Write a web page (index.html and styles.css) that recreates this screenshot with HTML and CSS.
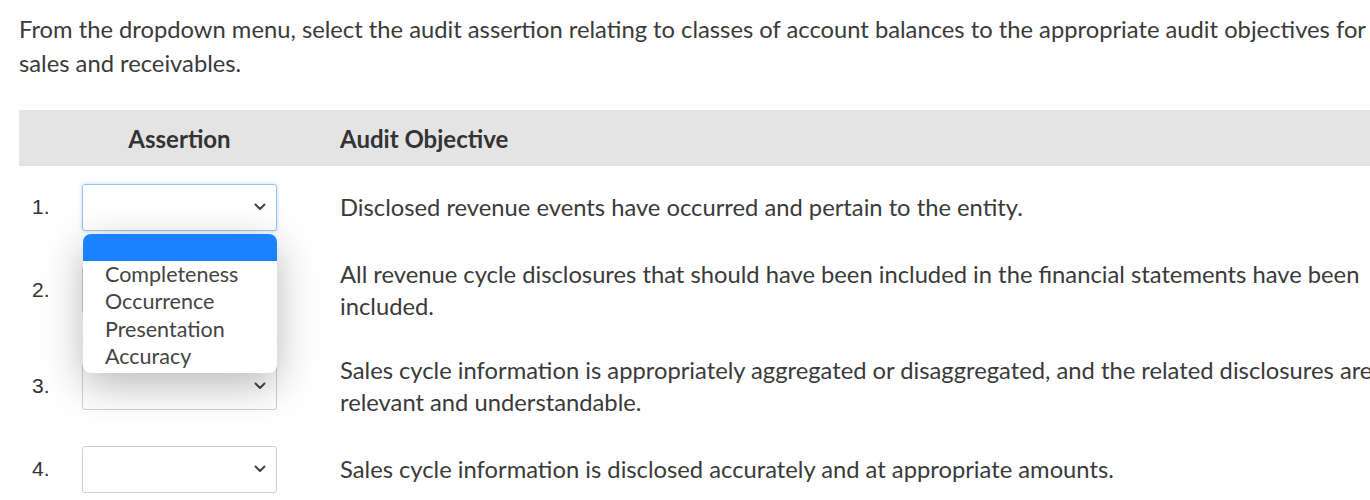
FILE: index.html
```html
<!DOCTYPE html>
<html lang="en">
<head>
<meta charset="utf-8">
<title>Audit assertions</title>
<link rel="stylesheet" href="styles.css">
</head>
<body>
<p class="intro">From the dropdown menu, select the audit assertion relating to classes of account balances to the appropriate audit objectives for sales and receivables.</p>

<div class="table">
  <div class="head">
    <div class="h-num"></div>
    <div class="h-assert">Assertion</div>
    <div class="h-gap"></div>
    <div class="h-obj">Audit Objective</div>
  </div>

  <div class="rows">
    <div class="num">1.</div>
    <div class="cell-select">
      <div class="select focused">
        <svg class="chev" width="12" height="8" viewBox="0 0 12 8"><path d="M1.5 1.5 L6 6 L10.5 1.5" fill="none" stroke="#444" stroke-width="2" stroke-linecap="round" stroke-linejoin="round"/></svg>
      </div>
      <div class="popup">
        <div class="opt selected"></div>
        <div class="opt">Completeness</div>
        <div class="opt">Occurrence</div>
        <div class="opt">Presentation</div>
        <div class="opt">Accuracy</div>
      </div>
    </div>
    <div></div>
    <div class="obj">Disclosed revenue events have occurred and pertain to the entity.</div>

    <div class="num">2.</div>
    <div class="cell-select">
      <div class="select">
        <svg class="chev" width="12" height="8" viewBox="0 0 12 8"><path d="M1.5 1.5 L6 6 L10.5 1.5" fill="none" stroke="#444" stroke-width="2" stroke-linecap="round" stroke-linejoin="round"/></svg>
      </div>
    </div>
    <div></div>
    <div class="obj">All revenue cycle disclosures that should have been included in the financial statements have been included.</div>

    <div class="num">3.</div>
    <div class="cell-select">
      <div class="select">
        <svg class="chev" width="12" height="8" viewBox="0 0 12 8"><path d="M1.5 1.5 L6 6 L10.5 1.5" fill="none" stroke="#444" stroke-width="2" stroke-linecap="round" stroke-linejoin="round"/></svg>
      </div>
    </div>
    <div></div>
    <div class="obj">Sales cycle information is appropriately aggregated or disaggregated, and the related disclosures are relevant and understandable.</div>

    <div class="num">4.</div>
    <div class="cell-select">
      <div class="select">
        <svg class="chev" width="12" height="8" viewBox="0 0 12 8"><path d="M1.5 1.5 L6 6 L10.5 1.5" fill="none" stroke="#444" stroke-width="2" stroke-linecap="round" stroke-linejoin="round"/></svg>
      </div>
    </div>
    <div></div>
    <div class="obj">Sales cycle information is disclosed accurately and at appropriate amounts.</div>
  </div>
</div>
</body>
</html>
```

FILE: styles.css
```css
html {
  overflow: hidden;
}
body {
  margin: 0;
  padding: 12px 0 0 19px;
  font-family: Lato, "Open Sans", sans-serif;
  font-size: 23.75px;
  color: #3a3a3a;
  background: #fff;
  width: 1420px;
}
.intro {
  margin: 0 0 30px 0;
  font-size: 23.75px;
  line-height: 34px;
  width: 1380px;
}
.table {
  width: 1420px;
}
.head,
.rows {
  display: grid;
  grid-template-columns: 63px 195px 63px 1080px;
}
.head {
  height: 56px;
  align-items: center;
  background: #e4e4e4;
  font-weight: 700;
  font-size: 24px;
  color: #333;
  margin-bottom: 6px;
}
.h-assert {
  text-align: center;
}
.rows {
  grid-auto-rows: minmax(70px, auto);
  align-items: center;
}
.num {
  padding-left: 13px;
  font-family: "Liberation Sans", Arial, sans-serif;
  font-size: 21px;
  color: #333;
}
.cell-select {
  position: relative;
}
.select {
  height: 45px;
  border: 1px solid #cfcfcf;
  border-radius: 3px;
  background: #fff;
  display: flex;
  align-items: center;
  justify-content: flex-end;
  padding-right: 10px;
}
.select.focused {
  border-color: #9cc3ec;
  box-shadow: 0 0 4px rgba(80, 150, 230, 0.35);
}
.obj {
  padding: 16px 0;
  line-height: 32px;
}
.popup {
  position: absolute;
  top: calc(100% + 3px);
  left: 1px;
  width: 194px;
  height: 139px;
  background: #fff;
  border-radius: 8px;
  overflow: hidden;
  box-shadow: 0 12px 40px rgba(0, 0, 0, 0.28);
  z-index: 5;
  font-size: 21.5px;
  color: #444;
}
.opt {
  height: 27.5px;
  line-height: 27.5px;
  padding-left: 22px;
}
.opt.selected {
  height: 27px;
  background: #1a82ff;
}
```
